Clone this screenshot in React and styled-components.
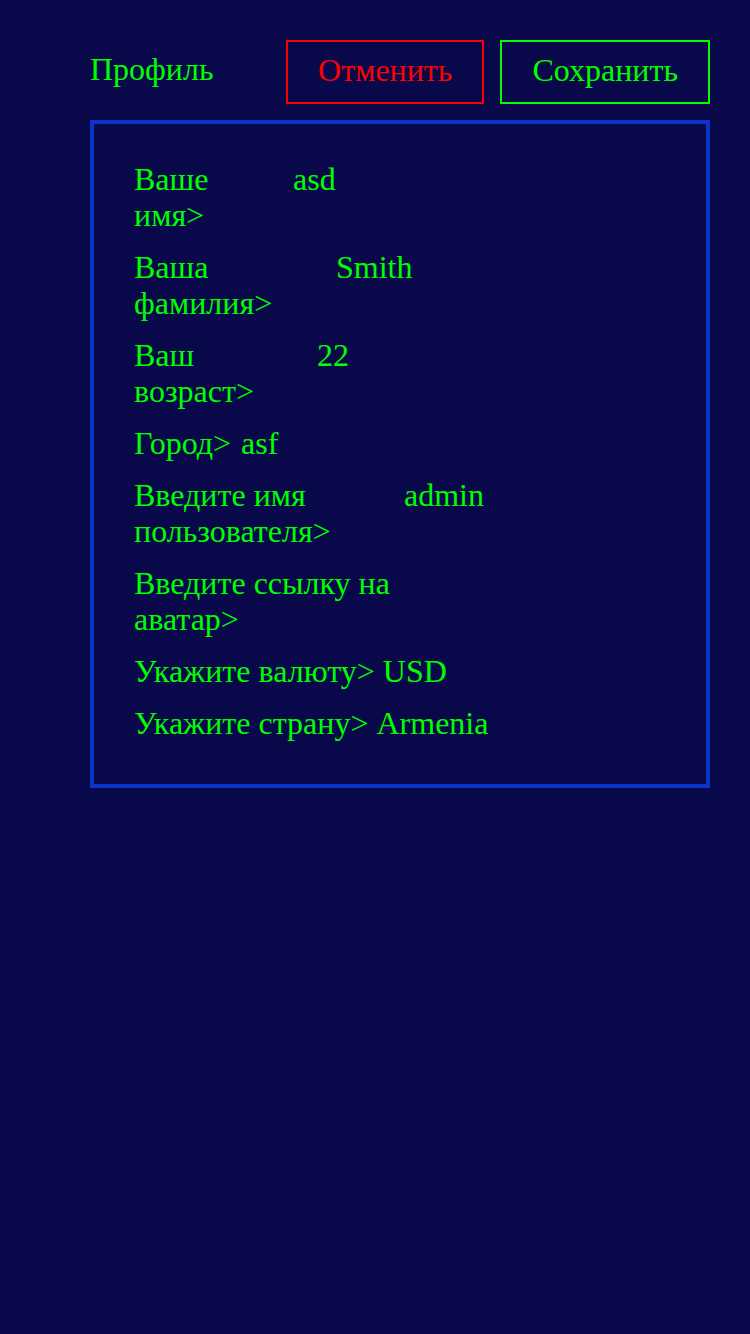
import React from "react";
import styled, { createGlobalStyle } from "styled-components";

const GlobalStyle = createGlobalStyle`
  html, body {
    margin: 0;
    padding: 0;
    background: #08084a;
  }
  body {
    font-family: "Liberation Serif", "Times New Roman", serif;
    min-height: 1334px;
  }
`;

const Page = styled.div`
  padding: 40px 40px 0 90px;
  min-height: 1334px;
  box-sizing: border-box;
  background: #08084a;
  color: #00ff00;
  font-size: 32px;
`;

const Header = styled.header`
  display: flex;
  align-items: center;
  justify-content: space-between;
`;

const Title = styled.h1`
  margin: 0 0 6px;
  font-size: 32px;
  font-weight: normal;
  line-height: 36px;
  color: #00ff00;
`;

const Actions = styled.div`
  display: flex;
  gap: 16px;
`;

const Button = styled.button`
  font-family: inherit;
  font-size: 32px;
  line-height: 36px;
  padding: 10px 30px 14px;
  background: transparent;
  border: 2px solid ${(p) => p.$color};
  color: ${(p) => p.$color};
  cursor: pointer;
`;

const Panel = styled.section`
  margin-top: 16px;
  border: 4px solid #0a35c8;
  padding: 37px 40px 43px;
  display: flex;
  flex-direction: column;
  gap: 16px;
`;

const Row = styled.div`
  display: flex;
  align-items: flex-start;
  line-height: 36px;
  min-height: 36px;
`;

const Label = styled.div`
  flex: none;
  width: ${(p) => (p.$width ? `${p.$width}px` : "auto")};
  margin-right: ${(p) => (p.$width ? "0" : "8px")};
`;

const Line = styled.span`
  display: block;
  white-space: nowrap;
`;

const Value = styled.div`
  white-space: nowrap;
`;

const rows = [
  { label: ["Ваше", "имя>"], value: "asd", width: 159 },
  { label: ["Ваша", "фамилия>"], value: "Smith", width: 202 },
  { label: ["Ваш", "возраст>"], value: "22", width: 183 },
  { label: ["Город>"], value: "asf", width: 107 },
  { label: ["Введите имя", "пользователя>"], value: "admin", width: 270 },
  { label: ["Введите ссылку на", "аватар>"], value: "", width: 270 },
  { label: ["Укажите валюту>"], value: "USD" },
  { label: ["Укажите страну>"], value: "Armenia" },
];

export default function App() {
  return (
    <>
      <GlobalStyle />
      <Page>
        <Header>
          <Title>Профиль</Title>
          <Actions>
            <Button $color="#ff0000">Отменить</Button>
            <Button $color="#00ff00">Сохранить</Button>
          </Actions>
        </Header>
        <Panel>
          {rows.map((r, i) => (
            <Row key={i}>
              <Label $width={r.width}>
                {r.label.map((l, j) => (
                  <Line key={j}>{l}</Line>
                ))}
              </Label>
              <Value>{r.value}</Value>
            </Row>
          ))}
        </Panel>
      </Page>
    </>
  );
}
